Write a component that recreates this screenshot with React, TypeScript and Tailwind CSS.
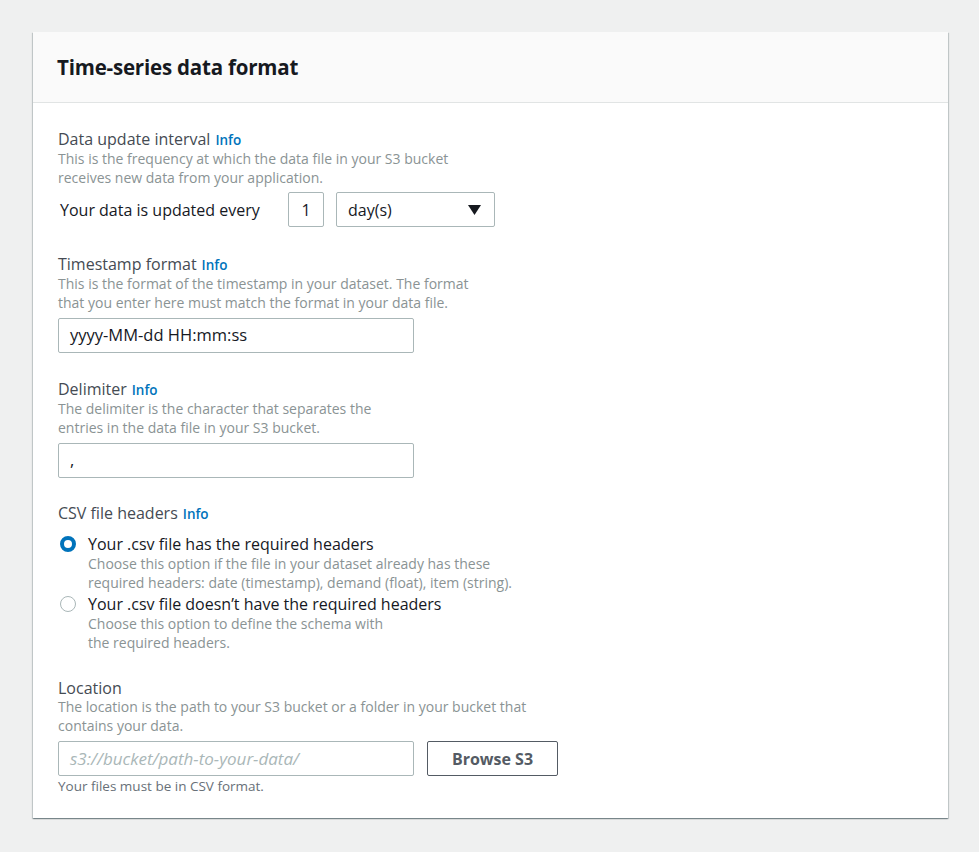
const font = { fontFamily: '"Open Sans", "Noto Sans", sans-serif' };

const Info = () => (
    <a className="ml-[5px] text-[13.5px] font-semibold text-[#0073bb]">Info</a>
);

const Label = ({ text, info = true }: { text: string; info?: boolean }) => (
    <div className="flex items-baseline text-[16px] leading-[20px] text-[#454b53]">
        {text}
        {info && <Info />}
    </div>
);

const Desc = ({ children }: { children: React.ReactNode }) => (
    <p className="text-[14px] leading-[18.5px] text-[#8a9394]">{children}</p>
);

const Radio = ({ checked, label, desc }: { checked: boolean; label: string; desc: React.ReactNode }) => (
    <div className="flex gap-[12px]">
        <div className="pt-[3px]">
            {checked ? (
                <div className="w-[16px] h-[16px] rounded-full border-[4px] border-[#0073bb] bg-white" />
            ) : (
                <div className="w-[16px] h-[16px] rounded-full border border-[#aab7b8] bg-white" />
            )}
        </div>
        <div>
            <div className="text-[16px] leading-[22px] text-[#16191f]">{label}</div>
            <Desc>{desc}</Desc>
        </div>
    </div>
);

export default function App() {
    return (
        <div className="min-h-[852px] bg-[#eff0f0] pt-[32px] pl-[33px] pr-[31px]" style={font}>
            <div className="bg-white shadow-[0_1px_1px_0_rgba(0,28,36,0.3),1px_1px_1px_0_rgba(0,28,36,0.15),-1px_1px_1px_0_rgba(0,28,36,0.15)]">
                {/* Header */}
                <div className="h-[71px] bg-[#fafafa] border-b border-[#e1e4e4] flex items-center px-[24px]">
                    <h2 className="text-[20.5px] font-bold tracking-[-0.2px] text-[#16191f]">Time-series data format</h2>
                </div>

                <div className="pl-[25px] pr-[24px] pt-[26px] pb-[23px]">
                    {/* Data update interval */}
                    <Label text="Data update interval" />
                    <Desc>
                        This is the frequency at which the data file in your S3 bucket
                        <br />
                        receives new data from your application.
                    </Desc>
                    <div className="flex items-center mt-[5px]">
                        <span className="w-[228px] text-[16px] text-[#16191f] ml-[2px]">Your data is updated every</span>
                        <div className="w-[36px] h-[35px] border border-[#aab7b8] rounded-[2px] flex items-center justify-center text-[16px] text-[#16191f]">
                            1
                        </div>
                        <div className="ml-[12px] w-[159px] h-[35px] border border-[#aab7b8] rounded-[2px] flex items-center justify-between pl-[11px] pr-[13px] text-[16px] text-[#16191f]">
                            day(s)
                            <svg width="13" height="10" viewBox="0 0 13 10">
                                <path d="M0 0h13L6.5 10z" fill="#16191f" />
                            </svg>
                        </div>
                    </div>

                    {/* Timestamp format */}
                    <div className="mt-[27px]">
                        <Label text="Timestamp format" />
                        <Desc>
                            This is the format of the timestamp in your dataset. The format
                            <br />
                            that you enter here must match the format in your data file.
                        </Desc>
                        <div className="mt-[6px] w-[356px] h-[35px] border border-[#aab7b8] rounded-[2px] flex items-center px-[11px] text-[16.5px] text-[#16191f]">
                            yyyy-MM-dd HH:mm:ss
                        </div>
                    </div>

                    {/* Delimiter */}
                    <div className="mt-[26px]">
                        <Label text="Delimiter" />
                        <Desc>
                            The delimiter is the character that separates the
                            <br />
                            entries in the data file in your S3 bucket.
                        </Desc>
                        <div className="mt-[6px] w-[356px] h-[35px] border border-[#aab7b8] rounded-[2px] flex items-center px-[11px] text-[16.5px] text-[#16191f]">
                            ,
                        </div>
                    </div>

                    {/* CSV file headers */}
                    <div className="mt-[25px]">
                        <Label text="CSV file headers" />
                        <div className="mt-[9px] pl-[2px] flex flex-col gap-[1px]">
                            <Radio
                                checked
                                label="Your .csv file has the required headers"
                                desc={
                                    <>
                                        Choose this option if the file in your dataset already has these
                                        <br />
                                        required headers: date (timestamp), demand (float), item (string).
                                    </>
                                }
                            />
                            <Radio
                                checked={false}
                                label="Your .csv file doesn’t have the required headers"
                                desc={
                                    <>
                                        Choose this option to define the schema with
                                        <br />
                                        the required headers.
                                    </>
                                }
                            />
                        </div>
                    </div>

                    {/* Location */}
                    <div className="mt-[26px]">
                        <Label text="Location" info={false} />
                        <Desc>
                            The location is the path to your S3 bucket or a folder in your bucket that
                            <br />
                            contains your data.
                        </Desc>
                        <div className="mt-[6px] flex items-center gap-[13px]">
                            <div className="w-[356px] h-[35px] border border-[#aab7b8] rounded-[2px] flex items-center px-[11px] text-[17px] italic text-[#aab7b8]">
                                s3://bucket/path-to-your-data/
                            </div>
                            <button className="w-[131px] h-[35px] border border-[#545b64] rounded-[2px] bg-white text-[16px] font-bold text-[#545b64]">
                                Browse S3
                            </button>
                        </div>
                        <p className="mt-[1px] text-[13.5px] leading-[18px] text-[#687078]">Your files must be in CSV format.</p>
                    </div>
                </div>
            </div>
        </div>
    );
}
